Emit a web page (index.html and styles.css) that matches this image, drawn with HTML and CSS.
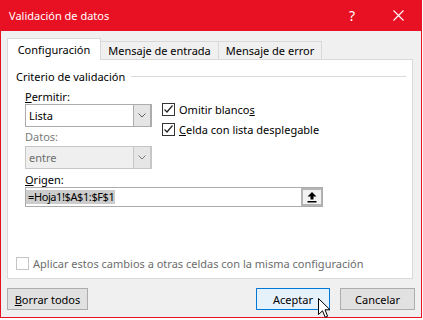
FILE: index.html
```html
<!DOCTYPE html>
<html lang="es">
<head>
<meta charset="utf-8">
<title>Validación de datos</title>
<link rel="stylesheet" href="styles.css">
</head>
<body>
<div class="dialog">
  <div class="titlebar">
    <span class="title">Validación de datos</span>
    <span class="tb-btn help">?</span>
    <span class="tb-btn close"><svg width="11" height="11" viewBox="0 0 11 11"><path d="M0.5 0.5L10.5 10.5M10.5 0.5L0.5 10.5" stroke="#fff" stroke-width="1.1" fill="none"/></svg></span>
  </div>
  <div class="content">
    <div class="tabs">
      <div class="tab active">Configuración</div>
      <div class="tab t2">Mensaje de entrada</div>
      <div class="tab t3">Mensaje de error</div>
    </div>
    <div class="panel">
      <div class="legend"><span class="legend-text">Criterio de validación</span><span class="rule"></span></div>
      <div class="form">
        <div class="top">
          <div class="col1">
            <div class="label first"><u>P</u>ermitir:</div>
            <div class="select">
              <span class="val">Lista</span>
              <span class="drop"><svg width="8" height="5" viewBox="0 0 8 5"><path d="M0.5 0.5L4 4L7.5 0.5" stroke="#606060" stroke-width="1" fill="none"/></svg></span>
            </div>
            <div class="label disabled">Datos:</div>
            <div class="select disabled">
              <span class="val">entre</span>
              <span class="drop"><svg width="8" height="5" viewBox="0 0 8 5"><path d="M0.5 0.5L4 4L7.5 0.5" stroke="#7a7a7a" stroke-width="1" fill="none"/></svg></span>
            </div>
          </div>
          <div class="col2">
            <div class="check"><span class="box"><svg width="11" height="11" viewBox="0 0 11 11"><path d="M1.5 5.5L4 8L9.5 1.5" stroke="#222" stroke-width="1.2" fill="none"/></svg></span><span>Omitir blanco<u>s</u></span></div>
            <div class="check"><span class="box"><svg width="11" height="11" viewBox="0 0 11 11"><path d="M1.5 5.5L4 8L9.5 1.5" stroke="#222" stroke-width="1.2" fill="none"/></svg></span><span><u>C</u>elda con lista desplegable</span></div>
          </div>
        </div>
        <div class="label origen"><u>O</u>rigen:</div>
        <div class="input">
          <span class="sel">=Hoja1!$A$1:$F$1</span>
          <span class="ref-btn"><svg width="10" height="11" viewBox="0 0 10 11"><path d="M5 0L9.5 4.5H6.5V7.5H3.5V4.5H0.5Z" fill="#000"/><rect x="0.5" y="9" width="9" height="1.5" fill="#000"/></svg></span>
        </div>
      </div>
      <div class="apply"><span class="box dis"></span><span>Aplicar estos cambios a otras celdas con la misma configuración</span></div>
    </div>
    <div class="buttons">
      <button class="btn borrar"><u>B</u>orrar todos</button>
      <span class="spacer"></span>
      <button class="btn primary">Aceptar</button>
      <button class="btn cancel">Cancelar</button>
    </div>
  </div>
</div>
<svg class="cursor" width="13" height="21" viewBox="0 0 13 21"><path d="M0.5 0.5L0.5 16.5L4.5 12.8L7.2 19.2L9.6 18.2L7 11.8L12 11.8Z" fill="#fff" stroke="#000" stroke-width="1" stroke-linejoin="miter"/></svg>
</body>
</html>
```

FILE: styles.css
```css
* { box-sizing: border-box; }
html, body { margin: 0; padding: 0; }
body {
  width: 423px;
  height: 320px;
  overflow: hidden;
  position: relative;
  background: #ffffff;
  font-family: "Noto Sans", "Open Sans", sans-serif;
  font-size: 11px;
  color: #000;
}
.dialog {
  width: 422px;
  height: 318px;
  background: #f0f0f0;
  border: 1px solid #e81123;
  border-top: 0;
}
.titlebar {
  height: 31px;
  background: #e81123;
  color: #fff;
  display: flex;
  align-items: center;
}
.title {
  flex: 1;
  padding-left: 8px;
  font-size: 11px;
}
.tb-btn {
  width: 46px;
  height: 31px;
  display: flex;
  align-items: center;
  justify-content: center;
}
.help { font-size: 14px; padding-bottom: 1px; }
.content {
  padding: 7px 6px 0 6px;
}
.tabs {
  display: flex;
  align-items: flex-end;
  height: 21px;
}
.tab {
  border: 1px solid #d9d9d9;
  border-bottom: 0;
  background: #f0f0f0;
  height: 18px;
  line-height: 16px;
  text-align: center;
  margin-left: -1px;
  padding-top: 1px;
}
.tab.active {
  margin-left: 0;
  width: 94px;
  height: 22px;
  line-height: 19px;
  margin-bottom: -1px;
  background: #fff;
  position: relative;
  z-index: 2;
}
.t2 { width: 119px; }
.t3 { width: 104px; }
.panel {
  position: relative;
  z-index: 1;
  width: 406px;
  height: 220px;
  background: #fff;
  border: 1px solid #d9d9d9;
  padding: 8px 0 8px 8px;
  display: flex;
  flex-direction: column;
}
.legend {
  display: flex;
  align-items: center;
  height: 16px;
}
.rule {
  flex: 1;
  height: 1px;
  background: #d9d9d9;
  margin: 0 6px 0 6px;
}
.form {
  padding-left: 9px;
}
.top {
  display: flex;
}
.col1 { width: 127px; }
.col2 {
  padding-top: 15px;
  margin-left: 10px;
}
.label {
  line-height: 15px;
  height: 15px;
  margin-top: 2px;
  margin-bottom: 2px;
}
.label.first { margin-top: 5px; margin-bottom: 0; }
.label.disabled { color: #7a7a7a; }
.label.origen { margin-top: 3px; margin-bottom: 0; }
.select {
  height: 23px;
  border: 1px solid #acacac;
  background: #fff;
  display: flex;
}
.select .val {
  flex: 1;
  padding-left: 3px;
  line-height: 21px;
}
.select .drop {
  width: 18px;
  background: #e5e5e5;
  border-left: 1px solid #acacac;
  border-right: 1px solid #acacac;
  display: flex;
  align-items: center;
  justify-content: center;
}
.select.disabled {
  background: #efefef;
  border-color: #c6c6c6;
}
.select.disabled .val { color: #6d6d6d; }
.select.disabled .drop {
  background: #e6e6e6;
  border-color: #c6c6c6;
}
.check {
  height: 20px;
  display: flex;
  align-items: center;
}
.box {
  width: 13px;
  height: 13px;
  border: 1px solid #333;
  background: #fff;
  margin-right: 4px;
  display: flex;
  align-items: center;
  justify-content: center;
  flex: none;
}
.box.dis { border-color: #c4c4c4; }
.input {
  width: 298px;
  height: 20px;
  border: 1px solid #acacac;
  background: #fff;
  display: flex;
  align-items: center;
}
.sel {
  flex: none;
  background: #cccccc;
  line-height: 14px;
  height: 14px;
  padding: 0 1px 0 2px;
  letter-spacing: -0.4px;
}
.ref-btn {
  margin-left: auto;
  width: 21px;
  height: 18px;
  background: #f2f2f2;
  border: 2px solid #b4b4b4;
  border-right-width: 1px;
  display: flex;
  align-items: center;
  justify-content: center;
}
.apply {
  margin-top: auto;
  display: flex;
  align-items: center;
  height: 13px;
  color: #6d6d6d;
}
.buttons {
  display: flex;
  margin-top: 9px;
  gap: 10px;
}
.spacer { flex: 1; }
.btn {
  height: 22px;
  border: 1px solid #adadad;
  background: #e1e1e1;
  font-family: inherit;
  font-size: 11px;
  color: #000;
  padding: 0;
  line-height: 19px;
}
.borrar { width: 81px; }
.primary { width: 74px; background: #e5f1fb; border-color: #0078d7; }
.cancel { width: 75px; }
.cursor {
  position: absolute;
  left: 318px;
  top: 298px;
}
```
